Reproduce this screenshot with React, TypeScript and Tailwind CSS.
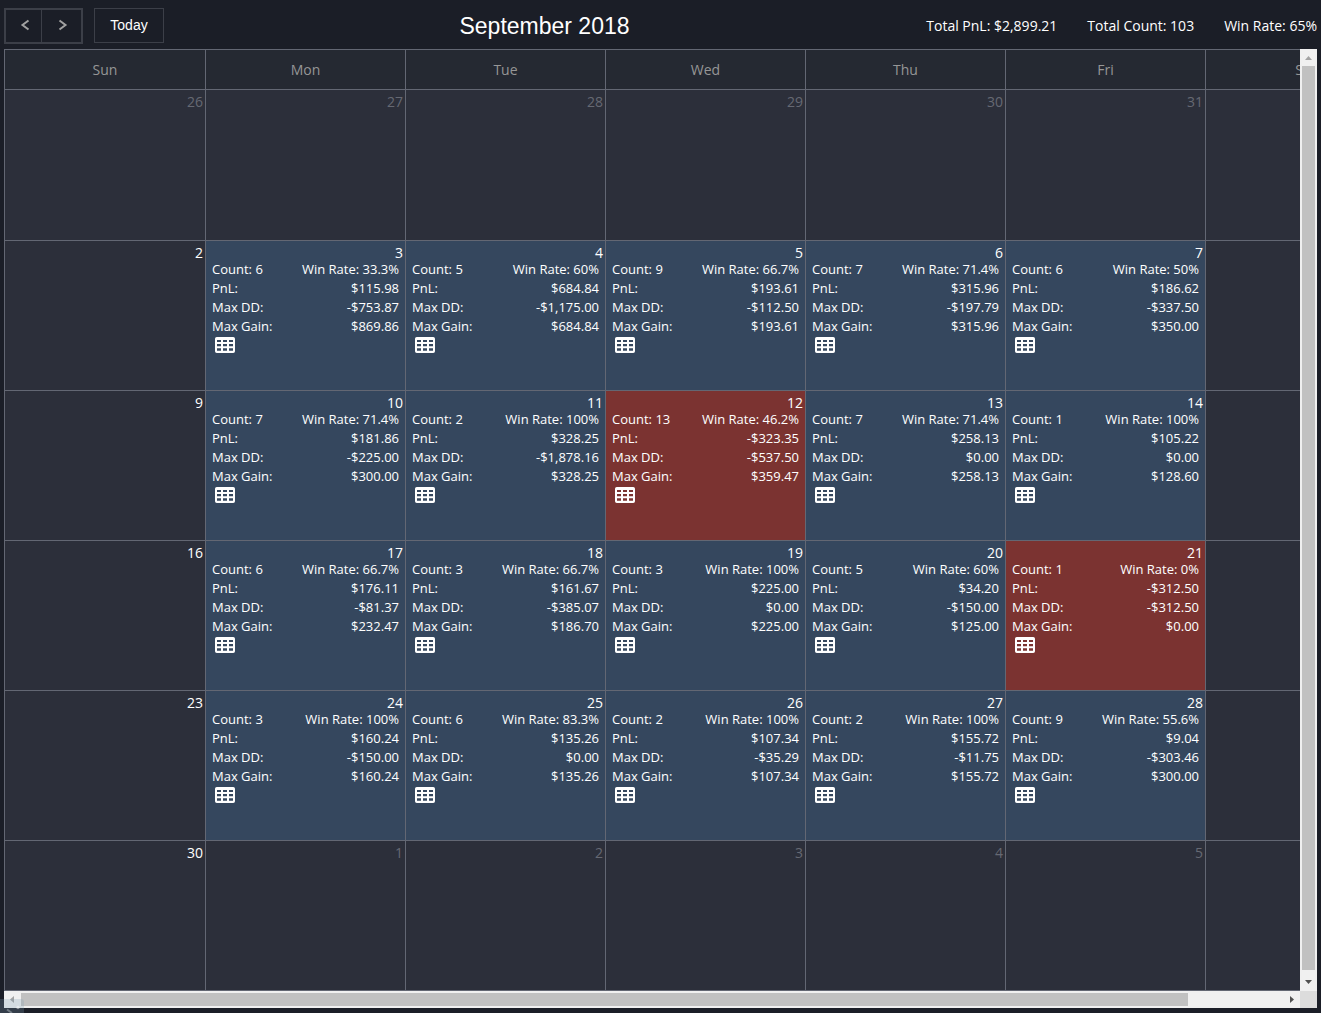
import clsx from "clsx";

interface IDay {
  count: number;
  winRate: string;
  pnl: string;
  maxDD: string;
  maxGain: string;
}

const day = (
  count: number,
  winRate: string,
  pnl: string,
  maxDD: string,
  maxGain: string
): IDay => ({ count, winRate, pnl, maxDD, maxGain });

const days: Record<number, IDay> = {
  3: day(6, "33.3%", "$115.98", "-$753.87", "$869.86"),
  4: day(5, "60%", "$684.84", "-$1,175.00", "$684.84"),
  5: day(9, "66.7%", "$193.61", "-$112.50", "$193.61"),
  6: day(7, "71.4%", "$315.96", "-$197.79", "$315.96"),
  7: day(6, "50%", "$186.62", "-$337.50", "$350.00"),
  10: day(7, "71.4%", "$181.86", "-$225.00", "$300.00"),
  11: day(2, "100%", "$328.25", "-$1,878.16", "$328.25"),
  12: day(13, "46.2%", "-$323.35", "-$537.50", "$359.47"),
  13: day(7, "71.4%", "$258.13", "$0.00", "$258.13"),
  14: day(1, "100%", "$105.22", "$0.00", "$128.60"),
  17: day(6, "66.7%", "$176.11", "-$81.37", "$232.47"),
  18: day(3, "66.7%", "$161.67", "-$385.07", "$186.70"),
  19: day(3, "100%", "$225.00", "$0.00", "$225.00"),
  20: day(5, "60%", "$34.20", "-$150.00", "$125.00"),
  21: day(1, "0%", "-$312.50", "-$312.50", "$0.00"),
  24: day(3, "100%", "$160.24", "-$150.00", "$160.24"),
  25: day(6, "83.3%", "$135.26", "$0.00", "$135.26"),
  26: day(2, "100%", "$107.34", "-$35.29", "$107.34"),
  27: day(2, "100%", "$155.72", "-$11.75", "$155.72"),
  28: day(9, "55.6%", "$9.04", "-$303.46", "$300.00"),
};

const weekDays = ["Sun", "Mon", "Tue", "Wed", "Thu", "Fri", "Sat"];

// September 2018 starts on a Saturday, the first cell is August 26
const weeks = Array.from({ length: 6 }, (_, w) =>
  Array.from({ length: 7 }, (_, d) => {
    const n = w * 7 + d - 5;
    if (n < 1) return { date: n + 31, outside: true };
    if (n > 30) return { date: n - 30, outside: true };
    return { date: n, outside: false };
  })
);

export default function App() {
  return (
    <div className="w-[1321px] h-[1013px] overflow-hidden bg-[#1b1e27] px-1 font-['Open_Sans',sans-serif] text-white relative">
      <Toolbar />
      <div className="flex h-[942px]">
        <div className="w-[1296px] overflow-hidden">
          <Calendar />
        </div>
        <VerticalScrollbar />
      </div>
      <HorizontalScrollbar />
      <StatusBubble />
    </div>
  );
}

function Toolbar() {
  return (
    <div className="grid grid-cols-[1fr_auto_1fr] h-[49px] pt-2 items-start">
      <div className="flex items-start">
        <div className="flex w-[79px] h-9 border-2 border-[#3c3f48] text-[#a2a2a2]">
          <button className="w-9 border-r border-[#3c3f48] flex items-center justify-center pl-0.5 pb-0.5">
            <Chevron left />
          </button>
          <button className="flex-1 flex items-center justify-center pl-0.5 pb-0.5">
            <Chevron />
          </button>
        </div>
        <button className="ml-[11px] w-[70px] h-[35px] pb-px border border-[#3c3f48] font-['Liberation_Sans',sans-serif] text-sm">
          Today
        </button>
      </div>
      <h1 className="font-['Liberation_Sans',sans-serif] text-[23px] leading-9 -translate-x-[116px]">
        September 2018
      </h1>
      <div className="flex justify-end gap-[30px] text-sm leading-9 whitespace-nowrap">
        <span>Total PnL: $2,899.21</span>
        <span>Total Count: 103</span>
        <span>Win Rate: 65%</span>
      </div>
    </div>
  );
}

const Chevron = ({ left }: { left?: boolean }) => (
  <svg width="10" height="12" viewBox="0 0 10 12" fill="none">
    <path
      d={left ? "M8.5 1.5 2.5 6l6 4.5" : "M1.5 1.5 7.5 6l-6 4.5"}
      stroke="currentColor"
      strokeWidth="2"
    />
  </svg>
);

function Calendar() {
  return (
    <div className="w-[1402px] border-t border-l border-[#636773] bg-[#2c2f3a]">
      <div className="flex h-10 bg-[#252932]">
        {weekDays.map((name, i) => (
          <div
            key={name}
            className={clsx(
              "border-r border-b border-[#636773] text-center text-sm leading-[39px] text-[#969696]",
              i === 0 ? "w-[201px]" : "w-[200px]"
            )}
          >
            {name}
          </div>
        ))}
      </div>
      {weeks.map((week, w) => (
        <div key={w} className={clsx("flex", w === 0 ? "h-[151px]" : "h-[150px]")}>
          {week.map(({ date, outside }, i) => {
            const data = outside ? undefined : days[date];
            return (
              <div
                key={date}
                className={clsx(
                  "border-r border-b border-[#636773]",
                  i === 0 ? "w-[201px]" : "w-[200px]",
                  data && (data.pnl.startsWith("-") ? "bg-[#7b3331]" : "bg-[#35475e]")
                )}
              >
                <p
                  className={clsx(
                    "pr-0.5 pt-[3px] text-right text-sm leading-[17px] h-[19px]",
                    outside && "text-[#666973]"
                  )}
                >
                  {date}
                </p>
                {data && <Stats {...data} />}
              </div>
            );
          })}
        </div>
      ))}
    </div>
  );
}

const Stats = ({ count, winRate, pnl, maxDD, maxGain }: IDay) => (
  <div className="px-1.5 text-[13px] leading-[19px]">
    <Row label={`Count: ${count}`} value={`Win Rate: ${winRate}`} />
    <Row label="PnL:" value={pnl} />
    <Row label="Max DD:" value={maxDD} />
    <Row label="Max Gain:" value={maxGain} />
    <TableIcon />
  </div>
);

const TableIcon = () => (
  <svg className="ml-[3px] mt-px" width="20" height="16" viewBox="0 0 20 16">
    <path
      fill="#fff"
      fillRule="evenodd"
      d="M1.8 0h16.4A1.8 1.8 0 0 1 20 1.8v12.4a1.8 1.8 0 0 1-1.8 1.8H1.8A1.8 1.8 0 0 1 0 14.2V1.8A1.8 1.8 0 0 1 1.8 0z
        M2 3v2h4V3z M8 3v2h4V3z M14 3v2h4V3z
        M2 7v2.3h4V7z M8 7v2.3h4V7z M14 7v2.3h4V7z
        M2 11.3v2.5h4v-2.5z M8 11.3v2.5h4v-2.5z M14 11.3v2.5h4v-2.5z"
    />
  </svg>
);

const Row = ({ label, value }: { label: string; value: string }) => (
  <div className="flex justify-between whitespace-nowrap">
    <span>{label}</span>
    <span>{value}</span>
  </div>
);

function VerticalScrollbar() {
  return (
    <div className="w-[17px] bg-[#f0f0f0] flex flex-col items-center">
      <div className="h-[17px] flex items-center">
        <svg width="7" height="4" viewBox="0 0 7 4" fill="#a3a3a3">
          <path d="M0 4 3.5 0 7 4z" />
        </svg>
      </div>
      <div className="w-[13px] h-[904px] bg-[#c1c1c1]" />
      <div className="flex-1 flex items-center pt-0.5">
        <svg width="7" height="4" viewBox="0 0 7 4" fill="#505050">
          <path d="M0 0h7L3.5 4z" />
        </svg>
      </div>
    </div>
  );
}

function HorizontalScrollbar() {
  return (
    <div className="flex w-[1313px] h-[17px] bg-[#f0f0f0] items-center">
      <div className="w-[17px] flex justify-center pr-px">
        <svg width="4" height="7" viewBox="0 0 4 7" fill="#a3a3a3">
          <path d="M4 0v7L0 3.5z" />
        </svg>
      </div>
      <div className="w-[1167px] h-[13px] bg-[#c1c1c1]" />
      <div className="flex-1 flex justify-end pr-1.5">
        <svg width="4" height="7" viewBox="0 0 4 7" fill="#505050">
          <path d="M0 0v7l4-3.5z" />
        </svg>
      </div>
      <div className="w-[17px] h-[17px] bg-[#dcdcdc]" />
    </div>
  );
}

// translucent corner overlay, mostly hidden below the page edge
const StatusBubble = () => (
  <div className="absolute left-0 bottom-0 w-[24px] h-[14px] rounded-tr-[3px] bg-[#7f9fb2]/25">
    <svg width="24" height="14" viewBox="0 0 24 14" fill="none">
      <path d="M7 10.5l5 3.5" stroke="#9aa3aa" strokeOpacity=".6" strokeWidth="2" />
      <circle cx="18" cy="8.5" r="1.7" fill="#fff" fillOpacity=".45" />
    </svg>
  </div>
);
